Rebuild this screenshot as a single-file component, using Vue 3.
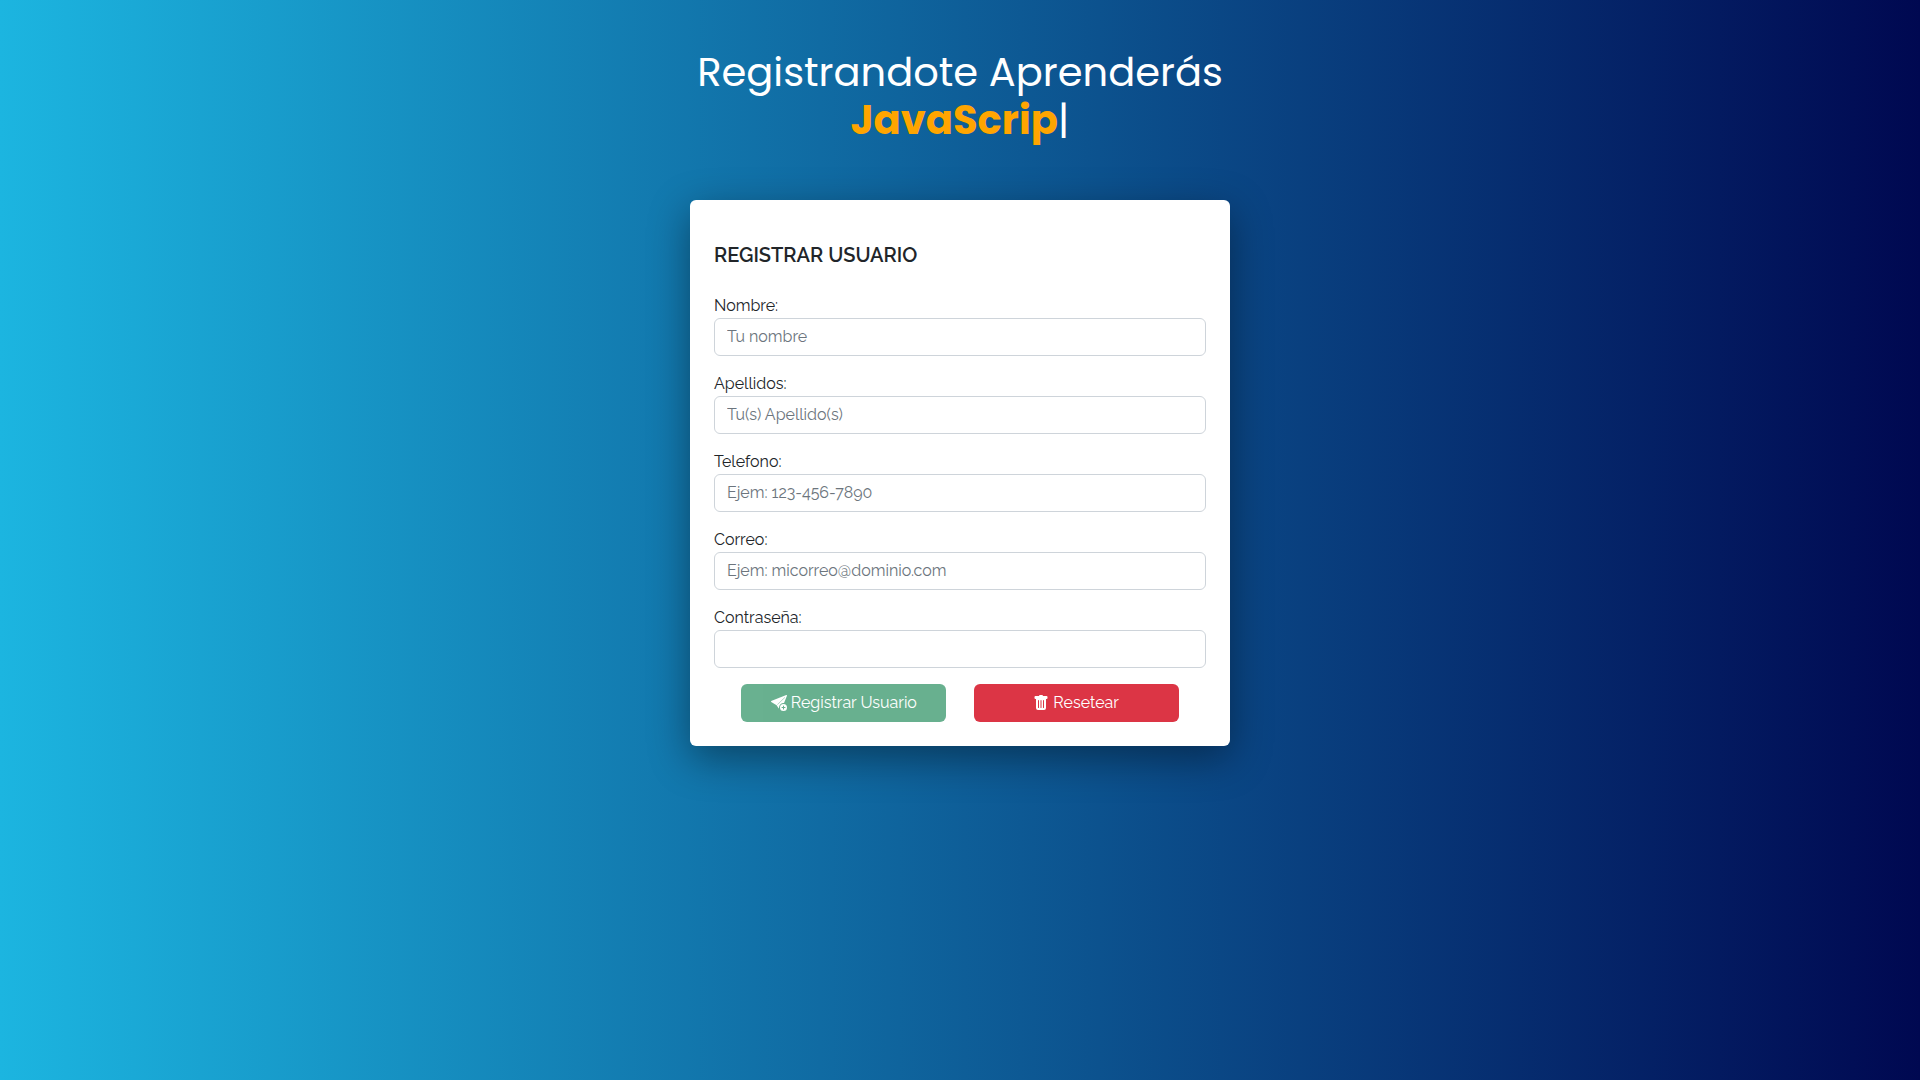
<script setup>
import { reactive } from 'vue'

const fields = [
  { id: 'nombre', label: 'Nombre:', type: 'text', placeholder: 'Tu nombre' },
  { id: 'apellidos', label: 'Apellidos:', type: 'text', placeholder: 'Tu(s) Apellido(s)' },
  { id: 'telefono', label: 'Telefono:', type: 'tel', placeholder: 'Ejem: 123-456-7890' },
  { id: 'correo', label: 'Correo:', type: 'email', placeholder: 'Ejem: micorreo@dominio.com' },
  { id: 'contrasena', label: 'Contraseña:', type: 'password', placeholder: '' }
]

const form = reactive({ nombre: '', apellidos: '', telefono: '', correo: '', contrasena: '' })

function reset() {
  for (const field of fields) form[field.id] = ''
}
</script>

<template>
  <main class="page">
    <h1 class="title">
      Registrandote Aprenderás<br />
      <span class="typed"><strong>JavaScrip</strong><span class="cursor">|</span></span>
    </h1>

    <form class="card" @submit.prevent @reset.prevent="reset">
      <h2 class="heading">REGISTRAR USUARIO</h2>

      <div v-for="field in fields" :key="field.id" class="field">
        <label :for="field.id">{{ field.label }}</label>
        <input :id="field.id" v-model="form[field.id]" :type="field.type" :placeholder="field.placeholder" />
      </div>

      <div class="actions">
        <button type="submit" class="btn btn-success" disabled>
          <svg viewBox="0 0 16 16" aria-hidden="true">
            <path d="M15.964.686a.5.5 0 0 0-.65-.65L.767 5.855H.766l-.452.18a.5.5 0 0 0-.082.887l.41.26.001.002 4.995 3.178 1.59 2.498C8 14 8 13 8 12.5a4.5 4.5 0 0 1 5.026-4.47L15.964.686Zm-1.833 1.89L6.45 9.85l-.25-.25 7.65-7.45Z" />
            <path d="M16 12.5a3.5 3.5 0 1 1-7 0 3.5 3.5 0 0 1 7 0Zm-3.5-2a.5.5 0 0 0-.5.5v1h-1a.5.5 0 0 0 0 1h1v1a.5.5 0 0 0 1 0v-1h1a.5.5 0 0 0 0-1h-1v-1a.5.5 0 0 0-.5-.5Z" />
          </svg>
          Registrar Usuario
        </button>
        <button type="reset" class="btn btn-danger">
          <svg viewBox="0 0 16 16" aria-hidden="true">
            <path d="M2.5 1a1 1 0 0 0-1 1v1a1 1 0 0 0 1 1H3v9a2 2 0 0 0 2 2h6a2 2 0 0 0 2-2V4h.5a1 1 0 0 0 1-1V2a1 1 0 0 0-1-1H10a1 1 0 0 0-1-1H7a1 1 0 0 0-1 1H2.5zm3 4a.5.5 0 0 1 .5.5v7a.5.5 0 0 1-1 0v-7a.5.5 0 0 1 .5-.5zM8 5a.5.5 0 0 1 .5.5v7a.5.5 0 0 1-1 0v-7A.5.5 0 0 1 8 5zm3 .5v7a.5.5 0 0 1-1 0v-7a.5.5 0 0 1 1 0z" />
          </svg>
          Resetear
        </button>
      </div>
    </form>
  </main>
</template>

<style>
body {
  margin: 0;
}
</style>

<style scoped>
.page {
  box-sizing: border-box;
  min-height: 100vh;
  padding: 48px 16px;
  display: flex;
  flex-direction: column;
  align-items: center;
  gap: 56px;
  background: linear-gradient(to right, #1cb5e0, #000851);
  color: #212529;
  font-family: Raleway, Lato, "Open Sans", sans-serif;
  font-size: 16px;
  line-height: 24px;
}

.title {
  margin: 0;
  color: #fff;
  font-family: Poppins, Inter, sans-serif;
  font-size: 40px;
  font-weight: 400;
  line-height: 48px;
  text-align: center;
}

.typed strong {
  color: #ffa500;
  font-weight: 700;
}

.card {
  box-sizing: border-box;
  width: 100%;
  max-width: 540px;
  padding: 24px;
  border-radius: 6px;
  background: #fff;
  box-shadow: 0 12px 40px rgba(0, 0, 0, 0.4);
}

.heading {
  margin: 19px 0 27px;
  font-size: 20px;
  font-weight: 600;
  line-height: 24px;
}

.field {
  display: flex;
  flex-direction: column;
  margin-bottom: 16px;
}

.field input {
  box-sizing: border-box;
  width: 100%;
  height: 38px;
  padding: 5px 12px 7px;
  border: 1px solid #ced4da;
  border-radius: 6px;
  background: #fff;
  color: #212529;
  font: inherit;
}

.field input::placeholder {
  color: #6c757d;
  opacity: 1;
}

.actions {
  display: flex;
  justify-content: space-evenly;
}

.btn {
  display: flex;
  align-items: center;
  justify-content: center;
  gap: 4px;
  width: 205px;
  height: 38px;
  padding: 0 12px;
  border: 0;
  border-radius: 6px;
  color: #fff;
  font: inherit;
}

.btn svg {
  width: 16px;
  height: 16px;
  fill: currentColor;
}

.btn-success {
  background: #198754;
  opacity: 0.65;
}

.btn-danger {
  background: #dc3545;
}
</style>
